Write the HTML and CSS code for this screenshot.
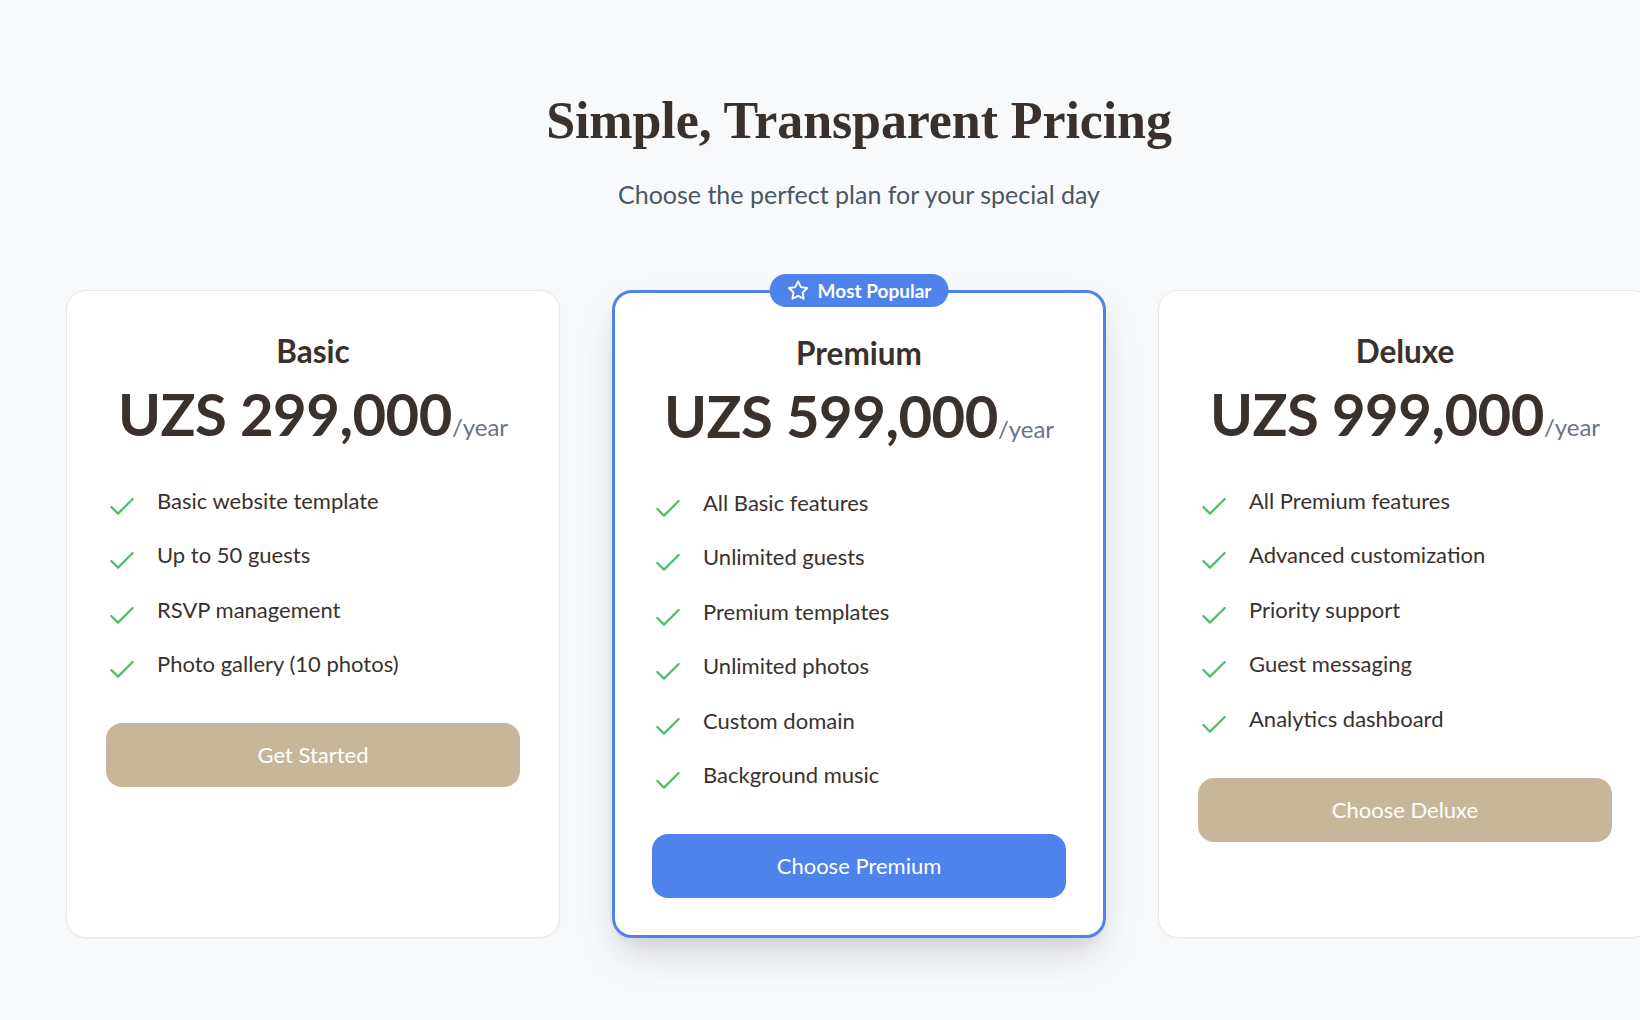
FILE: index.html
```html
<!DOCTYPE html>
<html lang="en">
<head>
<meta charset="utf-8">
<title>Pricing</title>
<link rel="stylesheet" href="styles.css">
</head>
<body>
<main class="pricing">
  <header class="pricing-head">
    <h1 class="pricing-title">Simple, Transparent Pricing</h1>
    <p class="pricing-sub">Choose the perfect plan for your special day</p>
  </header>

  <div class="plans">
    <article class="plan">
      <h3 class="plan-name">Basic</h3>
      <div class="plan-price"><span class="amount">UZS 299,000</span><span class="period">/year</span></div>
      <ul class="features">
        <li><svg class="check" viewBox="0 0 24 24"><polyline points="20 6 9 17 4 12"/></svg><span>Basic website template</span></li>
        <li><svg class="check" viewBox="0 0 24 24"><polyline points="20 6 9 17 4 12"/></svg><span>Up to 50 guests</span></li>
        <li><svg class="check" viewBox="0 0 24 24"><polyline points="20 6 9 17 4 12"/></svg><span>RSVP management</span></li>
        <li><svg class="check" viewBox="0 0 24 24"><polyline points="20 6 9 17 4 12"/></svg><span>Photo gallery (10 photos)</span></li>
      </ul>
      <button class="btn btn-tan">Get Started</button>
    </article>

    <article class="plan plan-featured">
      <span class="badge"><svg class="star" viewBox="0 0 24 24"><path d="M12 2.5l2.94 5.96 6.58.96-4.76 4.64 1.12 6.55L12 17.52l-5.88 3.09 1.12-6.55-4.760-4.64 6.58-.96z"/></svg>Most Popular</span>
      <h3 class="plan-name">Premium</h3>
      <div class="plan-price"><span class="amount">UZS 599,000</span><span class="period">/year</span></div>
      <ul class="features">
        <li><svg class="check" viewBox="0 0 24 24"><polyline points="20 6 9 17 4 12"/></svg><span>All Basic features</span></li>
        <li><svg class="check" viewBox="0 0 24 24"><polyline points="20 6 9 17 4 12"/></svg><span>Unlimited guests</span></li>
        <li><svg class="check" viewBox="0 0 24 24"><polyline points="20 6 9 17 4 12"/></svg><span>Premium templates</span></li>
        <li><svg class="check" viewBox="0 0 24 24"><polyline points="20 6 9 17 4 12"/></svg><span>Unlimited photos</span></li>
        <li><svg class="check" viewBox="0 0 24 24"><polyline points="20 6 9 17 4 12"/></svg><span>Custom domain</span></li>
        <li><svg class="check" viewBox="0 0 24 24"><polyline points="20 6 9 17 4 12"/></svg><span>Background music</span></li>
      </ul>
      <button class="btn btn-blue">Choose Premium</button>
    </article>

    <article class="plan">
      <h3 class="plan-name">Deluxe</h3>
      <div class="plan-price"><span class="amount">UZS 999,000</span><span class="period">/year</span></div>
      <ul class="features">
        <li><svg class="check" viewBox="0 0 24 24"><polyline points="20 6 9 17 4 12"/></svg><span>All Premium features</span></li>
        <li><svg class="check" viewBox="0 0 24 24"><polyline points="20 6 9 17 4 12"/></svg><span>Advanced customization</span></li>
        <li><svg class="check" viewBox="0 0 24 24"><polyline points="20 6 9 17 4 12"/></svg><span>Priority support</span></li>
        <li><svg class="check" viewBox="0 0 24 24"><polyline points="20 6 9 17 4 12"/></svg><span>Guest messaging</span></li>
        <li><svg class="check" viewBox="0 0 24 24"><polyline points="20 6 9 17 4 12"/></svg><span>Analytics dashboard</span></li>
      </ul>
      <button class="btn btn-tan">Choose Deluxe</button>
    </article>
  </div>
</main>
</body>
</html>
```
FILE: styles.css
```css
html {
  overflow: hidden;
  background: #f8f9fb;
}

body {
  margin: 0;
  padding: 0;
  background: #f8f9fb;
  font-family: Lato, "Noto Sans", sans-serif;
  color: #3a312c;
}

.pricing {
  width: 1718px;
  padding: 90px 0 80px;
}

.pricing-head {
  text-align: center;
}

.pricing-title {
  margin: 0;
  font-family: "Liberation Serif", "Times New Roman", serif;
  font-weight: 700;
  font-size: 52px;
  line-height: 62px;
  color: #3a312c;
  letter-spacing: -0.1px;
}

.pricing-sub {
  margin: 24px 0 0;
  font-size: 25px;
  line-height: 36px;
  color: #4b5563;
}

.plans {
  display: grid;
  grid-template-columns: repeat(3, 494px);
  gap: 52px;
  padding: 0 66px;
  margin-top: 78px;
  align-items: stretch;
}

.plan {
  position: relative;
  background: #ffffff;
  border: 1px solid #e9e7e4;
  border-radius: 20px;
  padding: 40px 39px 38px;
  box-shadow: 0 1px 3px rgba(0, 0, 0, 0.03);
  text-align: center;
}

.plan-featured {
  border: 3px solid #4f83ec;
  padding: 40px 37px 37px;
  box-shadow: 0 20px 40px -8px rgba(20, 30, 50, 0.18), 0 8px 16px -6px rgba(20, 30, 50, 0.08);
}

.badge {
  position: absolute;
  top: -19px;
  left: 50%;
  transform: translateX(-50%);
  display: inline-flex;
  align-items: center;
  gap: 8px;
  height: 33px;
  padding: 0 17px;
  border-radius: 999px;
  background: #4f83ec;
  color: #ffffff;
  font-size: 19px;
  font-weight: 700;
  white-space: nowrap;
}

.star {
  width: 23px;
  height: 23px;
  fill: none;
  stroke: #ffffff;
  stroke-width: 2;
  stroke-linejoin: round;
}

.plan-name {
  margin: 0;
  font-size: 31.5px;
  line-height: 40px;
  font-weight: 700;
  color: #3a312c;
}

.plan-price {
  margin-top: 13px;
  font-size: 58px;
  line-height: 60px;
  white-space: nowrap;
}

.amount {
  font-weight: 700;
  letter-spacing: -0.5px;
  color: #3a312c;
}

.period {
  font-size: 24px;
  line-height: 1;
  color: #6b7384;
}

.features {
  list-style: none;
  margin: 41px 0 0;
  padding: 0;
  display: flex;
  flex-direction: column;
  gap: 16.4px;
  text-align: left;
}

.features li {
  display: flex;
  align-items: flex-start;
  gap: 19px;
  font-size: 22px;
  line-height: 32px;
  color: #3a312c;
}

.check {
  flex: none;
  width: 32px;
  height: 32px;
  margin-top: 6px;
  fill: none;
  stroke: #4fbf67;
  stroke-width: 1.7;
  stroke-linecap: round;
  stroke-linejoin: round;
}

.btn {
  display: block;
  width: 100%;
  margin-top: 37px;
  padding: 18px 0;
  border: 0;
  border-radius: 16px;
  font-family: Lato, "Noto Sans", sans-serif;
  font-size: 22px;
  line-height: 28px;
  color: #ffffff;
  cursor: pointer;
}

.btn-tan {
  background: #c8b69b;
}

.btn-blue {
  background: #4f83ec;
}
```
